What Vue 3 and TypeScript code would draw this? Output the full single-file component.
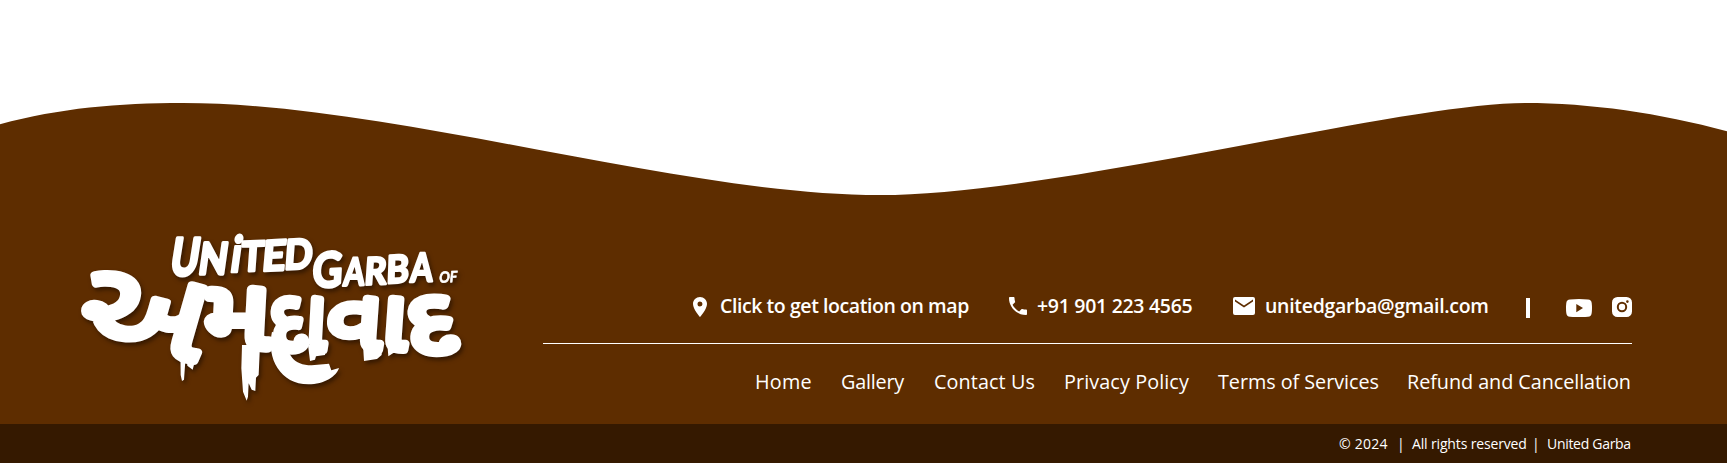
<script setup lang="ts">
interface Item { label: string; tracking: number }
interface Glyph { t: string; x: number; y: number; size: number; w: number; rot: number; skew: number; ink: number }

const nav: Item[] = [
  { label: 'Home', tracking: 0.2 },
  { label: 'Gallery', tracking: -0.2 },
  { label: 'Contact Us', tracking: 0.1 },
  { label: 'Privacy Policy', tracking: 0.1 },
  { label: 'Terms of Services', tracking: -0.04 },
  { label: 'Refund and Cancellation', tracking: -0.05 },
]

const legal: Item[] = [
  { label: '© 2024', tracking: 0.25 },
  { label: '|', tracking: 0 },
  { label: 'All rights reserved', tracking: -0.15 },
  { label: '|', tracking: 0 },
  { label: 'United Garba', tracking: -0.3 },
]

const latin: Glyph[] = [
  { t: 'U', x: 326, y: 180, size: 152, w: 84, rot: 0, skew: -9, ink: 12 },
  { t: 'N', x: 412, y: 177, size: 130, w: 86, rot: 0, skew: -8, ink: 10 },
  { t: 'i', x: 507, y: 170, size: 150, w: 32, rot: 0, skew: -8, ink: 8 },
  { t: 'T', x: 541, y: 169, size: 122, w: 68, rot: -2, skew: -6, ink: 9 },
  { t: 'E', x: 604, y: 168, size: 124, w: 70, rot: -3, skew: -8, ink: 9 },
  { t: 'D', x: 671, y: 163, size: 122, w: 84, rot: -2, skew: -6, ink: 9 },
  { t: 'G', x: 755, y: 218, size: 144, w: 90, rot: -3, skew: -6, ink: 9 },
  { t: 'A', x: 849, y: 212, size: 114, w: 62, rot: -2, skew: -6, ink: 8 },
  { t: 'R', x: 911, y: 209, size: 112, w: 66, rot: -2, skew: -6, ink: 8 },
  { t: 'B', x: 978, y: 205, size: 114, w: 68, rot: -3, skew: -5, ink: 8 },
  { t: 'A', x: 1050, y: 201, size: 118, w: 66, rot: -2, skew: -5, ink: 8 },
  { t: 'OF', x: 1136, y: 203, size: 46, w: 54, rot: -2, skew: -8, ink: 2 },
]

const gujarati: Glyph[] = [
  { t: 'અ', x: 32, y: 386, size: 372, w: 380, rot: 8, skew: -8, ink: 24 },
  { t: 'મ', x: 426, y: 400, size: 292, w: 200, rot: 0, skew: -3, ink: 28 },
  { t: 'દા', x: 626, y: 405, size: 255, w: 170, rot: 0, skew: -3, ink: 24 },
  { t: 'વા', x: 796, y: 405, size: 255, w: 240, rot: 0, skew: -4, ink: 24 },
  { t: 'દ', x: 1035, y: 412, size: 270, w: 150, rot: 0, skew: -4, ink: 26 },
]

const place = (g: Glyph) => `translate(${g.x} ${g.y}) rotate(${g.rot}) skewX(${g.skew})`
</script>

<template>
  <footer class="footer">
    <svg class="wave" viewBox="0 0 1727 200" aria-hidden="true">
      <path d="M0 124.3C60 108 118 103 183 103C393 103 677 195 880 195C1056 195 1402 103 1525 103C1590 103 1660 113 1727 131.3V200H0Z" />
    </svg>
    <div class="main">
      <svg class="logo" viewBox="0 0 1260 600" role="img" aria-label="United Garba of Amdavad">
        <g class="latin">
          <text v-for="(g, i) in latin" :key="i" :transform="place(g)" :font-size="g.size" :stroke-width="g.ink" :textLength="g.w" lengthAdjust="spacingAndGlyphs">{{ g.t }}</text>
        </g>
        <g class="gujarati">
          <text v-for="(g, i) in gujarati" :key="i" :transform="place(g)" :font-size="g.size" :stroke-width="g.ink" :textLength="g.w" lengthAdjust="spacingAndGlyphs">{{ g.t }}</text>
        </g>
        <g class="drips">
          <path d="M361 400L362 480L366 498L372 494L378 410L382 452L398 464L405 438L411 400Z" />
          <path d="M546 390L544 460L549 530L560 557L564 545L566 505L575 524L586 528L588 488L596 480L600 390Z" />
          <path d="M636 350C618 430 662 508 745 508C794 508 830 483 837 459L814 466L807 446L755 451C700 451 679 415 682 374Z" />
          <path d="M744 390L750 438L765 434L768 424L795 420L798 390ZM909 390L912 438L951 432L965 420V390ZM982 388L985 424L1000 414L1034 414L1038 388Z" />
        </g>
      </svg>
      <div class="details">
        <div class="contacts">
          <svg class="pin" viewBox="5 2 14 20"><path d="M12 2C8.13 2 5 5.13 5 9c0 5.25 7 13 7 13s7-7.75 7-13c0-3.87-3.13-7-7-7zm0 9.5a2.5 2.5 0 1 1 0-5 2.5 2.5 0 0 1 0 5z" /></svg>
          <a class="place">Click to get location on map</a>
          <svg class="phone" viewBox="3 3 18 18"><path d="M6.54 10.8c1.44 2.83 3.83 5.14 6.66 6.59l2.2-2.2c.27-.27.67-.36 1.02-.24 1.12.37 2.33.57 3.57.57.55 0 1 .45 1 1V20c0 .55-.45 1-1 1C10.61 21 3 13.39 3 4c0-.55.45-1 1-1h3.5c.55 0 1 .45 1 1 0 1.25.2 2.45.57 3.57.11.35.03.74-.25 1.02z" /></svg>
          <a class="number">+91 901 223 4565</a>
          <svg class="mail" viewBox="0 0 22 18"><path d="M2 0h18a2 2 0 0 1 2 2v14a2 2 0 0 1-2 2H2a2 2 0 0 1-2-2V2a2 2 0 0 1 2-2zm18 4.6V2.6L11 8.4 2 2.6v2l9 5.8z" /></svg>
          <a class="email">unitedgarba@gmail.com</a>
          <span class="divider"></span>
          <svg class="youtube" viewBox="0 0 26 18"><path d="M4 .4Q13-.4 22 .4Q25.4.5 25.7 4Q26.3 9 25.7 14Q25.4 17.5 22 17.7Q13 18.4 4 17.7Q.6 17.5.3 14Q-.3 9 .3 4Q.6.5 4 .4zM10.3 5v8.2L17 9.1z" fill-rule="evenodd" /></svg>
          <svg class="instagram" viewBox="0 0 20 20"><path fill-rule="evenodd" d="M5.5 0h9A5.5 5.5 0 0 1 20 5.5v9a5.5 5.5 0 0 1-5.5 5.5h-9A5.5 5.5 0 0 1 0 14.500v-9A5.5 5.5 0 0 1 5.5 0zM10 4.800a5.200 5.200 0 1 0 0 10.400 5.200 5.200 0 0 0 0-10.400zm0 2a3.200 3.200 0 1 1 0 6.400 3.200 3.200 0 0 1 0-6.400zM15.400 3.300a1.300 1.300 0 1 0 0 2.600 1.300 1.300 0 0 0 0-2.600z" /></svg>
        </div>
        <nav class="nav">
          <a v-for="n in nav" :key="n.label" :style="{ letterSpacing: n.tracking + 'px' }">{{ n.label }}</a>
        </nav>
      </div>
    </div>
    <div class="legal">
      <span v-for="(l, i) in legal" :key="i" :style="{ letterSpacing: l.tracking + 'px' }">{{ l.label }}</span>
    </div>
  </footer>
</template>

<style>
body { margin: 0; background: #fff; }
</style>

<style scoped>
.footer { width: 1727px; height: 463px; display: flex; flex-direction: column; overflow: hidden; color: #fff; font-family: "Open Sans", "Noto Sans", sans-serif; background: #fff; }
.wave { display: block; width: 1727px; height: 200px; fill: #5e2d00; flex: none; }
.main { box-sizing: border-box; height: 224px; padding: 15px 95px 0 60px; display: flex; justify-content: space-between; background: #5e2d00; }
.logo { width: 420px; height: 200px; overflow: visible; fill: #fff; stroke: #fff; stroke-linejoin: round; filter: drop-shadow(2px 3px 2px rgba(20, 8, 0, 0.55)); }
.latin { font-family: Lato, sans-serif; font-weight: 700; }
.gujarati { font-family: "Noto Sans Gujarati", "Noto Sans", sans-serif; font-weight: 400; }
.drips { stroke: none; }
.details { width: 1089px; }
.contacts { height: 129px; box-sizing: border-box; padding: 82px 0 0 150px; border-bottom: 1px solid #fff; display: grid; grid-template-columns: 27px 289px 28px 196px 32px 261px 40px 46px 20px; align-items: start; white-space: nowrap; }
.contacts svg { fill: #fff; display: block; }
.contacts a { font-size: 19.5px; font-weight: 600; line-height: 28px; margin-top: -5px; }
.pin { width: 14px; height: 20px; }
.phone { width: 18px; height: 18px; }
.mail { width: 22px; height: 18px; }
.place { letter-spacing: -0.43px; }
.number { letter-spacing: -0.3px; }
.email { letter-spacing: -0.3px; }
.divider { width: 4px; height: 20px; margin-top: 1px; background: #fff; }
.youtube { width: 26px; height: 18px; margin-top: 2px; }
.instagram { width: 20px; height: 20px; }
.nav { margin: 24px 0 0 212px; display: grid; grid-template-columns: 86px 93px 130px 154px 189px 225px; font-size: 19.8px; line-height: 28px; white-space: nowrap; }
.legal { box-sizing: border-box; height: 39px; padding: 10px 95px 0 0; display: grid; grid-template-columns: 58px 15px 120px 15px 85px; justify-content: end; background: #351900; font-size: 14px; line-height: 20px; white-space: nowrap; }
</style>
